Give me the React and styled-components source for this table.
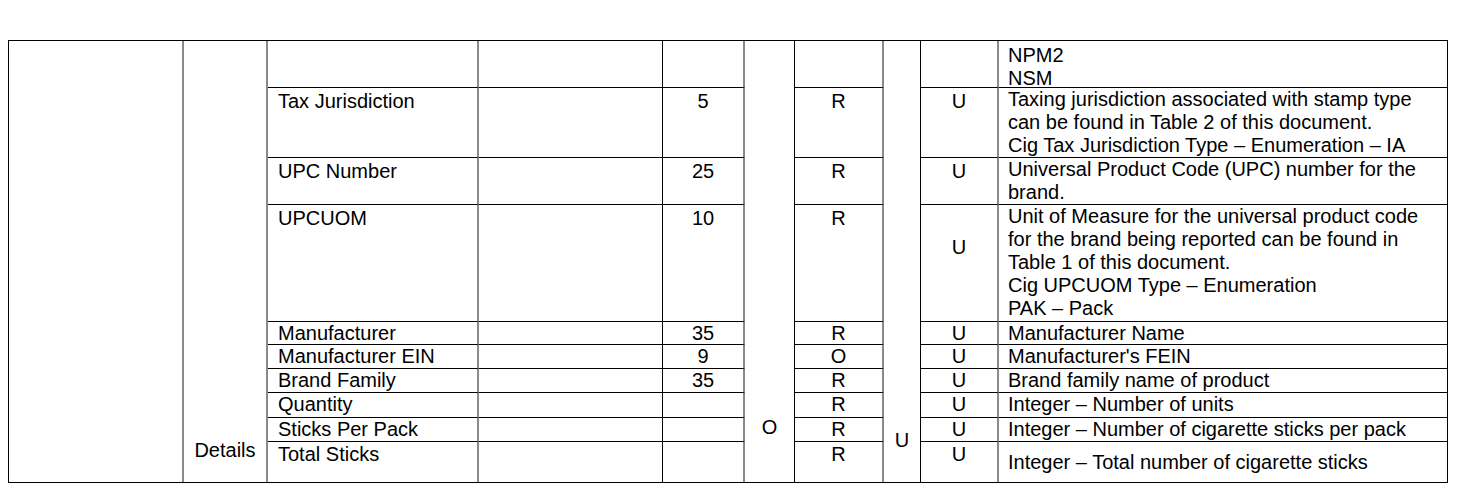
import React from "react";
import styled, { createGlobalStyle } from "styled-components";

const GlobalStyle = createGlobalStyle`
  html, body { margin: 0; padding: 0; background: #fff; }
  body {
    padding: 40px 0 0 8px;
    font-family: "Liberation Sans", Arial, sans-serif;
    font-size: 20px;
    line-height: 23px;
    color: #000;
  }
`;

const GRAY = "#8a8a8a";
const BLACK = "#000";

const Table = styled.div`
  display: grid;
  grid-template-columns: 175px 84px 211px 184px 82px 50px 89px 37px 78px 449px;
  grid-template-rows: 47px 70px 47px 117px 23px 24px 24px 25px 24px 40px;
  width: fit-content;
  border-top: 1px solid ${BLACK};
  border-left: 1px solid ${BLACK};
  border-bottom: 1px solid ${BLACK};
`;

const Cell = styled.div`
  box-sizing: border-box;
  grid-row: ${(p) => p.$row};
  grid-column: ${(p) => p.$col};
  border-right: ${(p) => (p.$edge === "gray" ? `2px solid ${GRAY}` : `1px solid ${BLACK}`)};
  border-bottom: ${(p) => (p.$last ? "none" : `1px solid ${BLACK}`)};
  padding: ${(p) => p.$pt || 0}px 0 0 ${(p) => p.$pl || 0}px;
  text-align: ${(p) => p.$align || "left"};
  display: flex;
  flex-direction: column;
  justify-content: ${(p) => (p.$middle ? "center" : "flex-start")};
  white-space: nowrap;
  overflow: hidden;
`;

const MergedCell = styled.div`
  box-sizing: border-box;
  grid-row: 1 / -1;
  grid-column: ${(p) => p.$col};
  border-right: ${(p) => (p.$edge === "gray" ? `2px solid ${GRAY}` : `1px solid ${BLACK}`)};
  display: flex;
  flex-direction: column;
  justify-content: flex-end;
  align-items: center;
  padding-bottom: ${(p) => p.$pb || 0}px;
`;

const Line = styled.span`
  display: block;
`;

const rows = [
  { name: "", len: "", req: "", use: "", desc: ["NPM2", "NSM"], pt: 2, descPt: 3 },
  {
    name: "Tax Jurisdiction",
    len: "5",
    req: "R",
    use: "U",
    pt: 2,
    desc: [
      "Taxing jurisdiction associated with stamp type",
      "can be found in Table 2 of this document.",
      "Cig Tax Jurisdiction Type – Enumeration – IA",
    ],
  },
  {
    name: "UPC Number",
    len: "25",
    req: "R",
    use: "U",
    pt: 2,
    desc: ["Universal Product Code (UPC) number for the", "brand."],
  },
  {
    name: "UPCUOM",
    len: "10",
    req: "R",
    use: "U",
    pt: 2,
    usePt: 31,
    desc: [
      "Unit of Measure for the universal product code",
      "for the brand being reported can be found in",
      "Table 1 of this document.",
      "Cig UPCUOM Type – Enumeration",
      "PAK – Pack",
    ],
  },
  { name: "Manufacturer", len: "35", req: "R", use: "U", pt: 0, desc: ["Manufacturer Name"] },
  { name: "Manufacturer EIN", len: "9", req: "O", use: "U", pt: 0, desc: ["Manufacturer's FEIN"] },
  { name: "Brand Family", len: "35", req: "R", use: "U", pt: 0, desc: ["Brand family name of product"] },
  { name: "Quantity", len: "", req: "R", use: "U", pt: 0, desc: ["Integer – Number of units"] },
  {
    name: "Sticks Per Pack",
    len: "",
    req: "R",
    use: "U",
    pt: 0,
    desc: ["Integer – Number of cigarette sticks per pack"],
  },
  {
    name: "Total Sticks",
    len: "",
    req: "R",
    use: "U",
    pt: 1,
    desc: ["Integer – Total number of cigarette sticks"],
    middle: true,
  },
];

export default function App() {
  const n = rows.length;
  return (
    <>
      <GlobalStyle />
      <Table>
        <MergedCell $col={1} $edge="gray" />
        <MergedCell $col={2} $edge="gray" $pb={20}>
          Details
        </MergedCell>
        <MergedCell $col={6} $edge="black" $pb={43}>
          O
        </MergedCell>
        <MergedCell $col={8} $edge="black" $pb={30}>
          U
        </MergedCell>
        {rows.map((r, i) => {
          const row = i + 1;
          const last = i === n - 1;
          return (
            <React.Fragment key={i}>
              <Cell $row={row} $col={3} $edge="gray" $last={last} $pl={10} $pt={r.pt}>
                {r.name}
              </Cell>
              <Cell $row={row} $col={4} $edge="black" $last={last} />
              <Cell $row={row} $col={5} $edge="gray" $last={last} $align="center" $pt={r.pt}>
                {r.len}
              </Cell>
              <Cell $row={row} $col={7} $edge="gray" $last={last} $align="center" $pt={r.pt}>
                {r.req}
              </Cell>
              <Cell
                $row={row}
                $col={9}
                $edge="gray"
                $last={last}
                $align="center"
                $pt={r.usePt || r.pt}
              >
                {r.use}
              </Cell>
              <Cell
                $row={row}
                $col={10}
                $edge="black"
                $last={last}
                $pl={9}
                $pt={r.descPt || 0}
                $middle={r.middle}
              >
                {r.desc.map((d, j) => (
                  <Line key={j}>{d}</Line>
                ))}
              </Cell>
            </React.Fragment>
          );
        })}
      </Table>
    </>
  );
}
